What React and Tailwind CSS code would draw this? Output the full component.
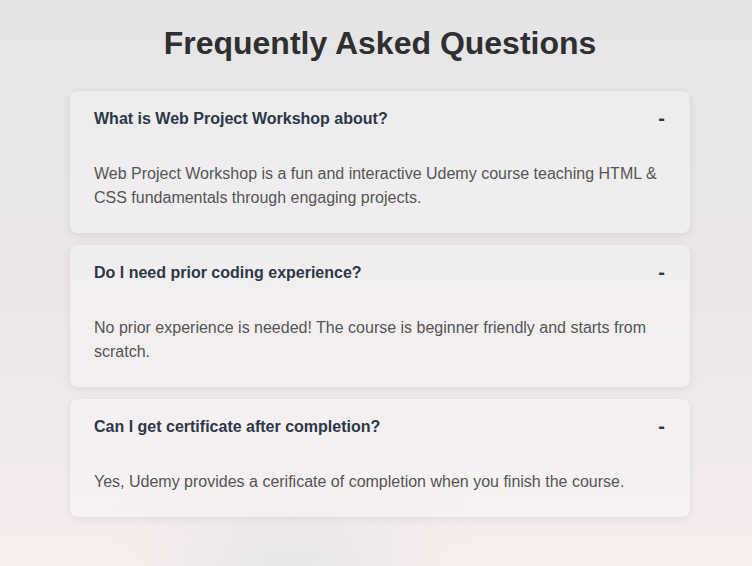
const faqs = [
  {
    q: "What is Web Project Workshop about?",
    a: "Web Project Workshop is a fun and interactive Udemy course teaching HTML & CSS fundamentals through engaging projects.",
  },
  {
    q: "Do I need prior coding experience?",
    a: "No prior experience is needed! The course is beginner friendly and starts from scratch.",
  },
  {
    q: "Can I get certificate after completion?",
    a: "Yes, Udemy provides a cerificate of completion when you finish the course.",
  },
];

export default function App() {
  return (
    <div className="relative min-h-[566px] overflow-hidden bg-[linear-gradient(180deg,#e4e4e6_0%,#ebe7e9_50%,#f6eded_100%)] font-['Liberation_Sans',Arial,sans-serif]">
      {/* soft blurred blob at the bottom */}
      <div className="absolute left-[200px] top-[520px] h-[110px] w-[180px] rounded-full bg-[#e6e6e9] blur-2xl" />
      <div className="relative flex flex-col items-center pt-[24px] pl-2">
        <h1 className="text-[32px] leading-[38px] font-bold text-[#2f2f2f]">
          Frequently Asked Questions
        </h1>
        <div className="mt-[29px] flex w-[620px] flex-col gap-3">
          {faqs.map((f) => (
            <div
              key={f.q}
              className="rounded-lg bg-white/30 shadow-[0_2px_8px_rgba(0,0,0,0.08)]"
            >
              <div className="flex items-center justify-between pl-6 pr-[25px] pt-[19px] pb-[17px]">
                <span className="text-base leading-[18px] font-bold text-[#2c3748]">
                  {f.q}
                </span>
                <span className="-mt-[2px] text-xl leading-[18px] font-bold text-[#2c3748]">-</span>
              </div>
              <p className="px-6 pt-[17px] pb-[23px] text-base leading-6 text-[#555]">{f.a}</p>
            </div>
          ))}
        </div>
      </div>
    </div>
  );
}
